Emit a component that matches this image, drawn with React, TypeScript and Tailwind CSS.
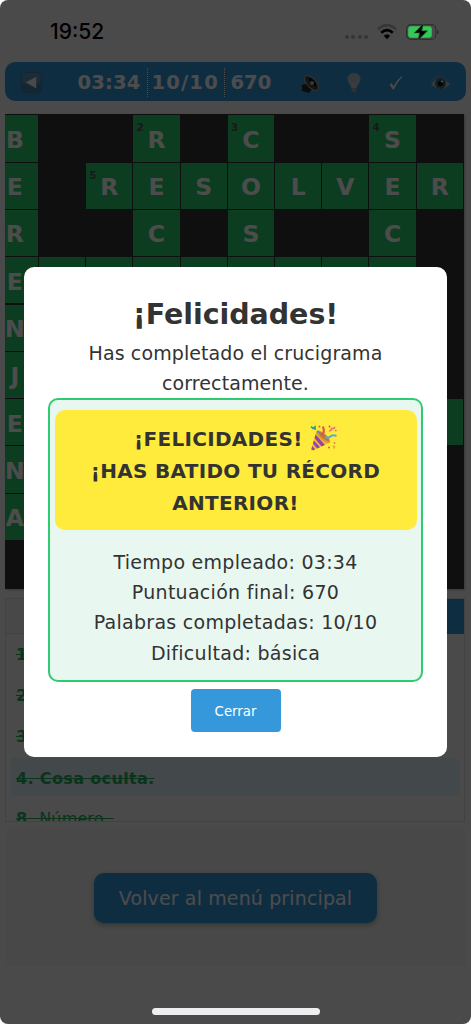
import React from "react";
import clsx from "clsx";

// "#" is a blocked square, "." an open square without a letter
const BOARD = [
  "B##R#C##S#",
  "E#RESOLVER",
  "R##C#S##C#",
  "E........#",
  "N##.#.##.#",
  "J##.#.##.#",
  "E##......." ,
  "N##.#.##.#",
  "A##.#.##.#",
  "##########",
];

const NUMBERS: Record<string, number> = {
  "0-3": 2,
  "0-5": 3,
  "0-8": 4,
  "1-2": 5,
};

const CLUES = [
  { number: 1, text: "" },
  { number: 2, text: "" },
  { number: 3, text: "" },
  { number: 4, text: "Cosa oculta." },
];

const STATS = [
  "Tiempo empleado: 03:34",
  "Puntuación final: 670",
  "Palabras completadas: 10/10",
  "Dificultad: básica",
];

const BackIcon = () => (
  <svg width="21" height="21" viewBox="0 0 20 20">
    <rect width="20" height="20" rx="3" fill="#4580a8" />
    <rect x="1" y="1" width="18" height="10" rx="2" fill="#5f93b5" />
    <path d="M4.5 10 L14.5 4.5 V15.5 Z" fill="#f2f6fa" />
  </svg>
);

const SpeakerIcon = () => (
  <svg width="22" height="20" viewBox="0 0 22 20">
    <path d="M1 12 L7 10 L11 16 L8 20 L1 18 Z" fill="#2b2b2b" />
    <ellipse
      cx="10.5"
      cy="10"
      rx="4.5"
      ry="9.3"
      transform="rotate(-42 10.5 10)"
      fill="#444"
      stroke="#aaa"
      strokeWidth="1"
    />
    <ellipse
      cx="11.5"
      cy="9"
      rx="2"
      ry="5.5"
      transform="rotate(-42 11.5 9)"
      fill="#111"
    />
    <circle cx="11" cy="10" r="2" fill="#bbb" />
    <path
      d="M11 2 Q17 4 18 11 M13 0.5 Q20.5 3 21 11"
      fill="none"
      stroke="#6d97b5"
      strokeWidth="1"
    />
  </svg>
);

const BulbIcon = () => (
  <svg width="14" height="20" viewBox="0 0 14 20">
    <path
      d="M7 0 C2.5 0 0.5 3 0.5 6 C0.5 10 4 11.5 4.2 15 H9.8 C10 11.5 13.5 10 13.5 6 C13.5 3 11.5 0 7 0 Z"
      fill="#b0c4d0"
    />
    <path d="M5 9 L6 14 H8 L9 9" fill="none" stroke="#c5d3dc" />
    <path d="M4.5 15 H9.5 V18 Q7 21 4.5 18 Z" fill="#9aa4aa" />
  </svg>
);

const CheckIcon = () => (
  <svg width="14" height="14" viewBox="0 0 14 14">
    <path
      d="M0.6 8.6 L2.8 7.2 L4.5 10.4 Q7.5 4.5 12.5 0.3 L13.2 0.9 Q8 6 5 13.6 H3.9 Z"
      fill="#f4f8fb"
    />
  </svg>
);

const EyeIcon = () => (
  <svg width="21" height="16" viewBox="0 0 21 16">
    <path
      d="M0.5 7 Q10 -5 20.5 9"
      fill="none"
      stroke="#8095a3"
      strokeWidth="1.2"
    />
    <path d="M1 9 Q9 -1.5 20 9 Q11 19 1 9 Z" fill="#b9c2c8" />
    <circle cx="10.5" cy="8.5" r="5.5" fill="#3d6883" />
    <circle cx="10.5" cy="8.5" r="2.8" fill="#111" />
    <circle cx="12" cy="6.5" r="1.1" fill="#fff" />
  </svg>
);

const PartyIcon = () => (
  <svg
    className="inline-block align-[-5px]"
    width="27"
    height="26"
    viewBox="0 0 27 26"
  >
    <path d="M6.5 6 L1 25 Q1.5 26 3 25.3 L20 17.5 Z" fill="#f7b32b" />
    <path d="M5.6 9.5 L14.8 20 L11.6 21.4 L4.6 13 Z" fill="#8e44ad" />
    <path d="M3.8 15.5 L10 22.2 L7.2 23.5 L3 18.5 Z" fill="#8e44ad" />
    <path d="M2.2 21 L5.2 24.4 L3 25.3 L1.4 24 Z" fill="#8e44ad" />
    <ellipse
      cx="13.3"
      cy="11.8"
      rx="3.4"
      ry="8.6"
      transform="rotate(-49 13.3 11.8)"
      fill="#e09a2a"
    />
    <ellipse
      cx="13.8"
      cy="11.4"
      rx="2"
      ry="6.6"
      transform="rotate(-49 13.8 11.4)"
      fill="#b07a40"
    />
    <path
      d="M11.5 11 Q15.5 7 12.8 1.5"
      fill="none"
      stroke="#e4574f"
      strokeWidth="2.2"
    />
    <path
      d="M15 12.5 Q20 13 21 11 Q23 9.5 26.5 11"
      fill="none"
      stroke="#5aa9e6"
      strokeWidth="2"
    />
    <path
      d="M19 5.5 Q21.5 6.5 21.5 3.5 Q23.5 4.5 25 2"
      fill="none"
      stroke="#ef6d7e"
      strokeWidth="1.5"
    />
    <path
      d="M1 1.5 L3 3.5 L5 2 L5 5"
      fill="none"
      stroke="#2f9e8f"
      strokeWidth="1.7"
    />
    <circle cx="8" cy="6.8" r="1.2" fill="#4a90d9" />
    <circle cx="9.5" cy="1.5" r="1" fill="#e4574f" />
    <circle cx="19.5" cy="1.4" r="1" fill="#e4574f" />
    <circle cx="25.8" cy="5.5" r="1" fill="#ef7d5e" />
    <circle cx="19" cy="22.5" r="1" fill="#e4574f" />
    <circle cx="24.5" cy="18" r="1" fill="#ef7d5e" />
    <path d="M22.5 20 L25.5 21.5 L24 24.5 Z" fill="#e8a13a" />
  </svg>
);

const StatusBar = () => (
  <div className="absolute inset-x-0 top-0 z-20 flex h-[62px] items-center justify-between pl-[50px] pr-[31px] pt-px">
    <span className="font-['Inter',sans-serif] text-[21px] font-medium tracking-[0px] text-black">
      19:52
    </span>
    <div className="flex items-center">
      <div className="mr-[9px] mt-[11px] flex gap-[2.4px]">
        {[0, 1, 2, 3].map((dot) => (
          <i key={dot} className="size-1 rounded-full bg-[#363636]" />
        ))}
      </div>
      <svg width="20" height="16" viewBox="0 0 20 16">
        <path
          d="M1 5.3 Q10 -3 19 5.3"
          fill="none"
          stroke="#363636"
          strokeWidth="2.6"
        />
        <path
          d="M4.2 8.8 Q10 3.6 15.8 8.8"
          fill="none"
          stroke="#000"
          strokeWidth="2.6"
        />
        <path d="M6.8 11.8 Q10 9 13.2 11.8 L10 15.2 Z" fill="#000" />
      </svg>
      <svg className="ml-[9px]" width="34" height="18" viewBox="0 0 34 18">
        <rect
          x="0.6"
          y="1.6"
          width="29.2"
          height="14.8"
          rx="4.5"
          fill="none"
          stroke="#303030"
          strokeWidth="1.2"
        />
        <rect x="2.2" y="3.2" width="23.6" height="11.6" rx="3" fill="#34c759" />
        <path d="M31 6.5 Q33 7.5 33 9 Q33 10.5 31 11.5 Z" fill="#303030" />
        <path
          d="M17.5 0.5 L8.2 10 H13.6 L11.8 17.5 L21.6 7.8 H15.8 Z"
          fill="#000"
          stroke="#1d6f32"
          strokeWidth="0.6"
        />
      </svg>
    </div>
  </div>
);

const Toolbar = () => (
  <header className="mx-[5px] flex h-[39px] w-[461px] items-center rounded-[10px] bg-[#3498db] px-[15.5px] pt-0.5 text-[19.5px] font-bold text-white">
    <BackIcon />
    <div className="ml-[36px] flex items-center">
      <span className="w-[69px] tracking-[0.2px]">03:34</span>
      <span className="w-[77.5px] border-l border-dotted border-white pl-[4px] tracking-[1.2px]">
        10/10
      </span>
      <span className="border-l border-dotted border-white pl-[5.5px]">
        670
      </span>
    </div>
    <div className="ml-auto flex items-center">
      <SpeakerIcon />
      <span className="ml-[24px]">
        <BulbIcon />
      </span>
      <span className="ml-[28px]">
        <CheckIcon />
      </span>
      <span className="ml-[27px]">
        <EyeIcon />
      </span>
    </div>
  </header>
);

const Board = () => (
  <div className="ml-[5px] mt-[13px] flex h-[475px] w-[458.5px] justify-end overflow-hidden bg-[#333] pr-[0.7px] pt-[1.3px] shadow-[1px_1px_2px_#bbb]">
    <div className="grid h-[472px] w-[471px] shrink-0 grid-cols-10 grid-rows-10 gap-[1.1px]">
      {BOARD.flatMap((row, y) =>
        row.split("").map((letter, x) => {
          const id = `${y}-${x}`;
          const blocked = letter === "#";
          return (
            <div
              key={id}
              className={clsx(
                "relative flex items-center justify-center pt-[4px] text-[23.5px] font-bold leading-none text-white",
                blocked ? "bg-[#333]" : "bg-[#2ecc71]"
              )}
            >
              {NUMBERS[id] && (
                <span className="absolute left-[3px] top-[7px] text-[10.5px] text-[#555]">
                  {NUMBERS[id]}
                </span>
              )}
              {!blocked && letter !== "." && letter}
            </div>
          );
        })
      )}
    </div>
  </div>
);

const Clues = () => (
  <section className="ml-[5px] mt-[8.5px] flex h-[224px] w-[460px] flex-col overflow-hidden border border-[#ddd] text-[16px]">
    <div className="flex h-[35px] shrink-0">
      <div className="flex-1 border-b border-[#ddd] bg-[#f2f2f2]" />
      <div className="flex-1 bg-[#3498db]" />
    </div>
    <ul className="mt-[0.5px] px-1 text-[#27ae60]">
      {CLUES.map(({ number, text }) => (
        <li
          key={number}
          className={clsx(
            "mb-[4px] flex h-[37.4px] items-center rounded-[5px] pl-[6px] pt-[4px] font-bold tracking-[0.35px] line-through",
            number === 4 && "bg-[#dff0f8]"
          )}
        >
          {number}. {text}
        </li>
      ))}
      <li className="flex h-[37px] items-center pl-[6px] pt-[2px]">
        <p className="whitespace-pre tracking-[0.15px] line-through">
          <b>8. </b>
          <span>Número. </span>
        </p>
      </li>
    </ul>
  </section>
);

interface ResultModalProps {
  title: string;
  children: React.ReactNode;
}

const ResultModal: React.FC<ResultModalProps> = ({ title, children }) => (
  <div className="absolute inset-0 z-10 flex items-start justify-center bg-black/70 pt-[267px]">
    <div className="flex h-[489.5px] w-[423.5px] flex-col items-center rounded-[10px] bg-white px-[24px] pt-[27px] text-center text-[#333]">
      <h2 className="text-[28.5px] font-bold leading-[42px] tracking-[-0.05px]">
        {title}
      </h2>
      {children}
    </div>
  </div>
);

export default function App() {
  return (
    <div className="relative h-[1024px] w-[471px] overflow-hidden rounded-[8px] bg-[#f7f7f7] pt-[62px] font-['DejaVu_Sans',Verdana,sans-serif]">
      <StatusBar />
      <Toolbar />
      <Board />
      <Clues />
      <footer className="ml-[5px] mt-[6.5px] flex h-[138px] w-[461px] items-center justify-center rounded-t-[10px] bg-[#f0f0f0]">
        <button className="mt-px h-[50px] w-[283px] rounded-[10px] bg-[#3498db] pt-[2px] text-[19px] tracking-[0.13px] text-white shadow-[0_2px_5px_rgba(0,0,0,0.3)]">
          Volver al menú principal
        </button>
      </footer>

      <ResultModal title="¡Felicidades!">
        <p className="pt-[2px] text-[19px] leading-[30.2px] tracking-[0.1px]">
          Has completado el crucigrama
          <br />
          correctamente.
        </p>
        <div className="h-[284px] w-[375px] shrink-0 rounded-[10px] border-[2.5px] border-[#2ecc71] bg-[#e8f8f0] px-[4.5px] pt-[9.5px]">
          <div className="h-[120px] rounded-[10px] bg-[#ffeb3b] pt-[14.5px] text-[20px] font-bold leading-[31.7px] tracking-[0.3px]">
            <p>
              ¡FELICIDADES! <PartyIcon />
            </p>
            <p>¡HAS BATIDO TU RÉCORD</p>
            <p>ANTERIOR!</p>
          </div>
          <div className="mt-[17px] text-[19px] leading-[30.2px] tracking-[0.28px]">
            {STATS.map((line) => (
              <p key={line}>{line}</p>
            ))}
          </div>
        </div>
        <button className="mt-[7px] h-[42.5px] w-[90px] shrink-0 rounded-[4px] bg-[#3498db] pt-[2px] text-[13.3px] text-white">
          Cerrar
        </button>
      </ResultModal>

      <div className="absolute bottom-[9px] left-[152px] z-20 h-[7px] w-[168px] rounded-full bg-[#eeedf0]" />
    </div>
  );
}
